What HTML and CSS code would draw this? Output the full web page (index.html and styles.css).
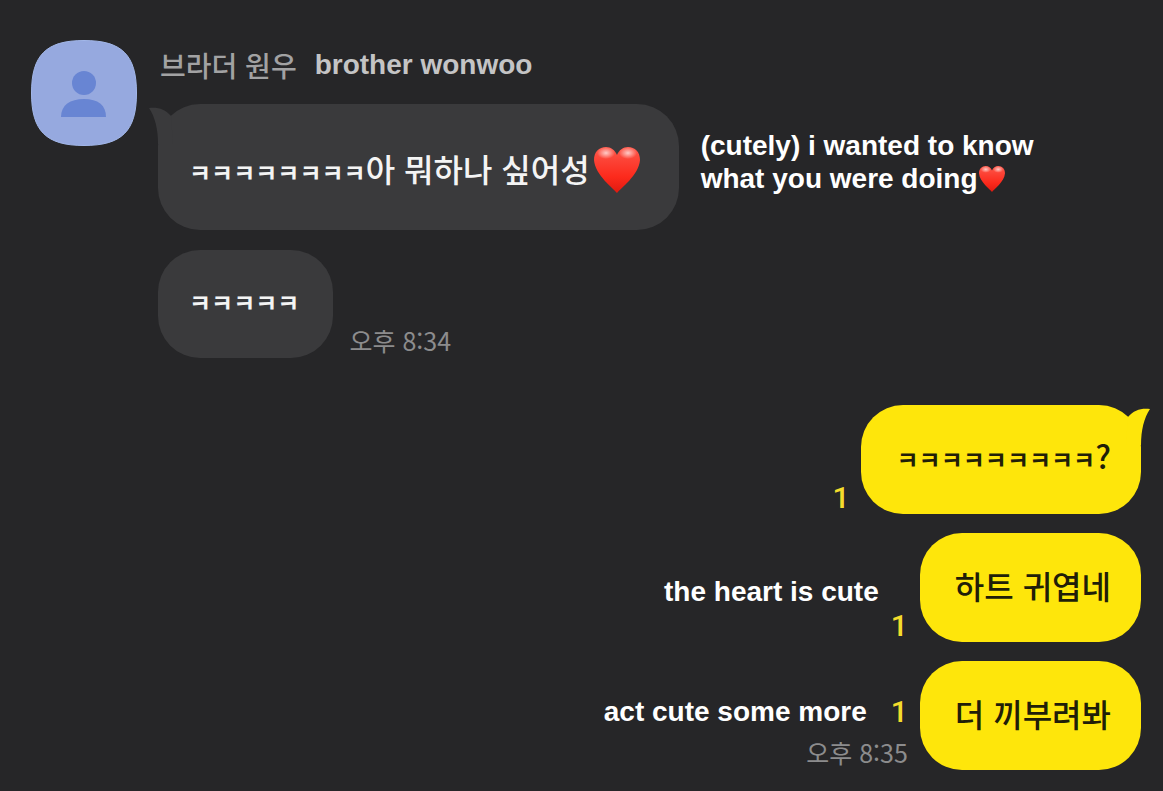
FILE: index.html
```html
<!DOCTYPE html>
<html lang="ko">

<head>
    <meta charset="UTF-8">
    <meta name="viewport" content="width=device-width, initial-scale=1.0">
    <title>브라더 원우</title>
    <link rel="stylesheet" href="styles.css">
</head>

<body>
    <svg class="defs" width="0" height="0" aria-hidden="true">
        <defs>
            <linearGradient id="red" x1="0" y1="0" x2="0" y2="1">
                <stop offset="0" stop-color="#ff5a4c"/>
                <stop offset="0.3" stop-color="#fc4235"/>
                <stop offset="0.65" stop-color="#fc2a1c"/>
                <stop offset="1" stop-color="#e01a10"/>
            </linearGradient>
            <radialGradient id="shine">
                <stop offset="0" stop-color="#fff" stop-opacity="0.7"/>
                <stop offset="1" stop-color="#fff" stop-opacity="0"/>
            </radialGradient>
            <symbol id="heart" viewBox="0 0 46 46">
                <path fill="url(#red)" d="M23 46C20 42 1 28 0 13C0 5 5 0 12 0C17 0 21 3 23 8C25 3 29 0 34 0C41 0 46 5 46 13C45 28 26 42 23 46Z"/>
                <ellipse fill="url(#shine)" cx="12" cy="6" rx="9" ry="6"/>
                <ellipse fill="url(#shine)" cx="34" cy="6" rx="9" ry="6"/>
            </symbol>
        </defs>
    </svg>
    <main class="chat">
        <section class="incoming">
            <svg class="avatar" viewBox="0 0 106 106" role="img" aria-label="브라더 원우">
                <path fill="#96a9df" stroke="#a3b8ea" d="M53 .5C91 .5 105.500 15 105.500 53C105.500 91 91 105.500 53 105.500C15 105.500 .5 91 .5 53C.5 15 15 .5 53 .5Z"/>
                <circle fill="#6885d3" cx="53" cy="43" r="12"/>
                <path fill="#6885d3" d="M30 77C30 65 39 59 53 59C67 59 75 65 75 77Z"/>
            </svg>
            <div class="messages">
                <h1 class="name">브라더 원우 <span class="name-en" lang="en">brother wonwoo</span></h1>
                <div class="row">
                    <div class="bubble tall">
                        <svg class="tail" viewBox="0 0 24 40" aria-hidden="true"><path d="M0 4C9 3 16 5 22 12L24 40H9C9 25 6 13 0 4Z"/></svg>
                        <p><span class="laugh">ㅋㅋㅋㅋㅋㅋㅋㅋ</span>아 뭐하나 싶어성</p>
                        <svg class="heart" role="img" aria-label="heart"><use href="#heart"/></svg>
                    </div>
                    <p class="note note-side" lang="en">(cutely) i wanted to know<br>what you were doing<svg class="heart-small" role="img" aria-label="heart"><use href="#heart"/></svg></p>
                </div>
                <div class="row">
                    <div class="bubble">
                        <p><span class="laugh">ㅋㅋㅋㅋㅋ</span></p>
                    </div>
                    <time class="time">오후 8:34</time>
                </div>
            </div>
        </section>
        <section class="outgoing">
            <div class="row">
                <span class="unread">1</span>
                <div class="bubble mine">
                    <svg class="tail" viewBox="0 0 24 40" aria-hidden="true"><path d="M24 4C15 3 8 5 2 12L0 40H15C15 25 18 13 24 4Z"/></svg>
                    <p><span class="laugh">ㅋㅋㅋㅋㅋㅋㅋㅋㅋ</span>?</p>
                </div>
            </div>
            <div class="row">
                <p class="note note-center" lang="en">the heart is cute</p>
                <span class="unread">1</span>
                <div class="bubble mine">
                    <p>하트 귀엽네</p>
                </div>
            </div>
            <div class="row">
                <div class="status">
                    <div class="status-top">
                        <p class="note" lang="en">act cute some more</p>
                        <span class="unread">1</span>
                    </div>
                    <time class="time">오후 8:35</time>
                </div>
                <div class="bubble mine">
                    <p>더 끼부려봐</p>
                </div>
            </div>
        </section>
    </main>
</body>

</html>
```

FILE: styles.css
```css
* {
    box-sizing: border-box;
}

body {
    margin: 0;
    background-color: #262628;
    font-family: "Noto Sans CJK KR", sans-serif;
    color: #f4f4f4;
}

h1, p {
    margin: 0;
}

.defs {
    position: absolute;
}

.chat {
    padding: 40px 22px 21px 31px;
}

.incoming {
    display: flex;
    gap: 21px;
}

.avatar {
    flex: none;
    width: 106px;
    height: 106px;
}

.messages {
    display: flex;
    flex-direction: column;
    gap: 20px;
}

.outgoing {
    display: flex;
    flex-direction: column;
    align-items: flex-end;
    gap: 19px;
    margin-top: 47px;
}

.name {
    display: flex;
    align-items: center;
    gap: 18px;
    height: 44px;
    padding: 6px 0 0 2px;
    font-size: 28px;
    font-weight: 500;
    line-height: 38px;
    color: #a2a2a3;
}

.name-en {
    font-family: "Liberation Sans", sans-serif;
    font-weight: 700;
    color: #c4c4c5;
}

.row {
    display: flex;
    align-items: flex-end;
    gap: 16px;
}

.bubble {
    position: relative;
    display: flex;
    align-items: center;
    min-height: 108px;
    padding: 0 34px 8px 31px;
    border-radius: 42px;
    background-color: #3a3a3c;
    font-size: 32px;
    font-weight: 500;
    line-height: 40px;
    white-space: nowrap;
}

.tall {
    min-height: 126px;
    padding: 5px 39px 0 31px;
}

.mine {
    min-height: 109px;
    padding: 0 30px 6px 35px;
    background-color: #fee60b;
    color: #211e08;
}

.laugh {
    font-size: 24px;
    font-weight: 700;
}

.tail {
    position: absolute;
    top: 0;
    left: -9px;
    width: 24px;
    height: 40px;
    fill: #3a3a3c;
}

.mine .tail {
    right: -9px;
    left: auto;
    fill: #fee60b;
}

.heart {
    width: 46px;
    height: 46px;
    margin-left: 4px;
}

.heart-small {
    width: 26px;
    height: 26px;
    margin-left: 1px;
    vertical-align: -4px;
}

.note {
    font-family: "Liberation Sans", sans-serif;
    font-size: 28px;
    font-weight: 700;
    line-height: 33px;
    color: #ffffff;
}

.note-side {
    align-self: center;
    padding: 0 0 10px 6px;
}

.note-center {
    align-self: center;
    padding-top: 8px;
}

.time {
    padding-bottom: 2px;
    font-size: 25px;
    line-height: 32px;
    color: #8c8c8d;
}

.unread {
    font-family: Roboto, sans-serif;
    font-size: 30px;
    font-weight: 500;
    line-height: 32px;
    color: #f4dc2c;
}

.outgoing .row {
    gap: 12px;
}

.status {
    display: flex;
    flex-direction: column;
    align-items: flex-end;
    gap: 8px;
}

.status-top {
    display: flex;
    align-items: center;
    gap: 24px;
}
```
